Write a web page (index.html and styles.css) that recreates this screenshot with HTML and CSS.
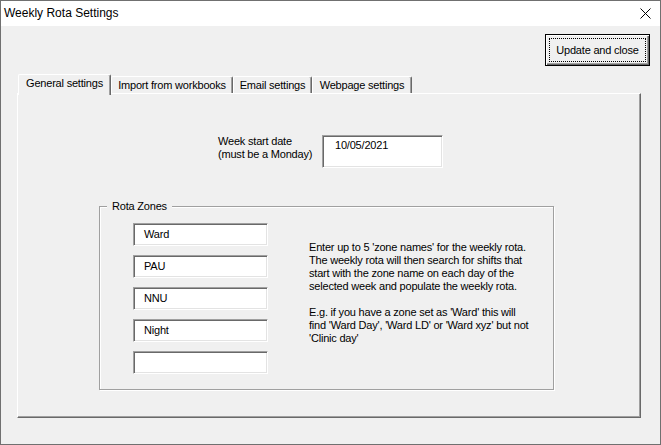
FILE: index.html
```html
<!DOCTYPE html>
<html>
<head>
<meta charset="utf-8">
<title>Weekly Rota Settings</title>
<link rel="stylesheet" href="styles.css">
</head>
<body>
<div class="window">
  <div class="titlebar">
    <span class="title">Weekly Rota Settings</span>
    <svg class="close" width="11" height="11" viewBox="0 0 11 11"><path d="M0.5 0.5 L10.5 10.5 M10.5 0.5 L0.5 10.5" stroke="#000" stroke-width="1" fill="none"/></svg>
  </div>
  <div class="client">
    <div class="toolbar">
      <button class="btn"><span class="btn-focus">Update and close</span></button>
    </div>
    <div class="tabs">
      <div class="tabstrip">
        <div class="tab tab-active tab-general">General settings</div>
        <div class="tab tab-import">Import from workbooks</div>
        <div class="tab tab-email">Email settings</div>
        <div class="tab tab-web">Webpage settings</div>
      </div>
      <div class="page">
        <div class="week-row">
          <div class="week-label">Week start date<br>(must be a Monday)</div>
          <div class="textbox date">10/05/2021</div>
        </div>
        <fieldset class="frame">
          <legend>Rota Zones</legend>
          <div class="zone-area">
            <div class="zones">
              <div class="textbox zone">Ward</div>
              <div class="textbox zone">PAU</div>
              <div class="textbox zone">NNU</div>
              <div class="textbox zone">Night</div>
              <div class="textbox zone"></div>
            </div>
            <p class="desc">Enter up to 5 'zone names' for the weekly rota.<br>The weekly rota will then search for shifts that<br>start with the zone name on each day of the<br>selected week and populate the weekly rota.<br><br>E.g. if you have a zone set as 'Ward' this will<br>find 'Ward Day', 'Ward LD' or 'Ward xyz' but not<br>'Clinic day'</p>
          </div>
        </fieldset>
      </div>
    </div>
  </div>
</div>
</body>
</html>
```

FILE: styles.css
```css
html, body {
  margin: 0;
  padding: 0;
}
body {
  background: #f0f0f0;
  font-family: "Liberation Sans", Arial, sans-serif;
  font-size: 11px;
  color: #000;
}
.window {
  width: 661px;
  height: 445px;
  box-sizing: border-box;
  border: 1px solid #707070;
  background: #f0f0f0;
  display: flex;
  flex-direction: column;
}
.titlebar {
  height: 25px;
  flex: none;
  background: #fff;
  display: flex;
  align-items: center;
  justify-content: space-between;
  padding-left: 3px;
}
.title {
  font-size: 12px;
  line-height: 16px;
  margin-bottom: 2px;
}
.close {
  display: block;
  margin-right: 9px;
}
.client {
  flex: 1;
  padding: 8px 10px 0 16px;
  display: flex;
  flex-direction: column;
  letter-spacing: -0.2px;
}
.toolbar {
  display: flex;
  justify-content: flex-end;
}
.btn {
  width: 105px;
  height: 32px;
  box-sizing: border-box;
  margin: 0;
  padding: 3px;
  border: 1px solid #000;
  background: #f0f0f0;
  box-shadow: inset 1px 1px 0 #fff, inset -1px -1px 0 #696969, inset -2px -2px 0 #a0a0a0;
  font-family: inherit;
  font-size: 11px;
  letter-spacing: -0.2px;
  color: #000;
  display: flex;
}
.btn-focus {
  flex: 1;
  border: 1px dotted #000;
  display: flex;
  align-items: center;
  justify-content: center;
  line-height: 13px;
}
.tabs {
  margin-top: 8px;
  margin-right: 9px;
}
.tabstrip {
  display: flex;
  align-items: flex-end;
  height: 19px;
  padding-left: 1px;
}
.tab {
  height: 17px;
  box-sizing: border-box;
  border-left: 1px solid #fff;
  border-top: 1px solid #fff;
  border-right: 1px solid #696969;
  border-top-left-radius: 2px;
  border-top-right-radius: 2px;
  box-shadow: inset -1px 0 0 #a0a0a0;
  padding-top: 2px;
  line-height: 13px;
  text-align: center;
  white-space: nowrap;
}
.tab-active {
  height: 21px;
  margin-bottom: -2px;
  position: relative;
  z-index: 1;
  background: #f0f0f0;
}
.tab-general { width: 93px; }
.tab-import { width: 122px; }
.tab-email { width: 79px; }
.tab-web { width: 100px; }
.page {
  height: 325px;
  box-sizing: border-box;
  border: 1px solid;
  border-color: #fff #696969 #696969 #fff;
  box-shadow: inset -1px -1px 0 #a0a0a0;
}
.week-row {
  display: flex;
  margin: 41px 0 0 200px;
}
.week-label {
  width: 104px;
  line-height: 13px;
}
.textbox {
  box-sizing: border-box;
  background: #fff;
  border: 1px solid;
  border-color: #a0a0a0 #fff #fff #a0a0a0;
  box-shadow: inset 1px 1px 0 #696969, inset -1px -1px 0 #e3e3e3;
  line-height: 13px;
}
.date {
  width: 121px;
  height: 33px;
  padding: 3px 0 0 12px;
}
.frame {
  margin: 32px 0 0 81px;
  width: 455px;
  box-sizing: border-box;
  padding: 10px 0 15px 0;
  border: 1px solid #a0a0a0;
  box-shadow: inset 1px 1px 0 #fff, 1px 1px 0 #fff;
  min-width: 0;
}
.frame legend {
  margin-left: 7px;
  padding: 0 5px;
  line-height: 13px;
  background: #f0f0f0;
}
.zone-area {
  display: flex;
  align-items: flex-start;
  padding-left: 33px;
}
.zones {
  display: flex;
  flex-direction: column;
  gap: 9px;
}
.zone {
  width: 135px;
  height: 23px;
  padding: 4px 0 0 10px;
}
.desc {
  margin: 18px 0 0 41px;
  line-height: 13px;
  white-space: nowrap;
}
```
